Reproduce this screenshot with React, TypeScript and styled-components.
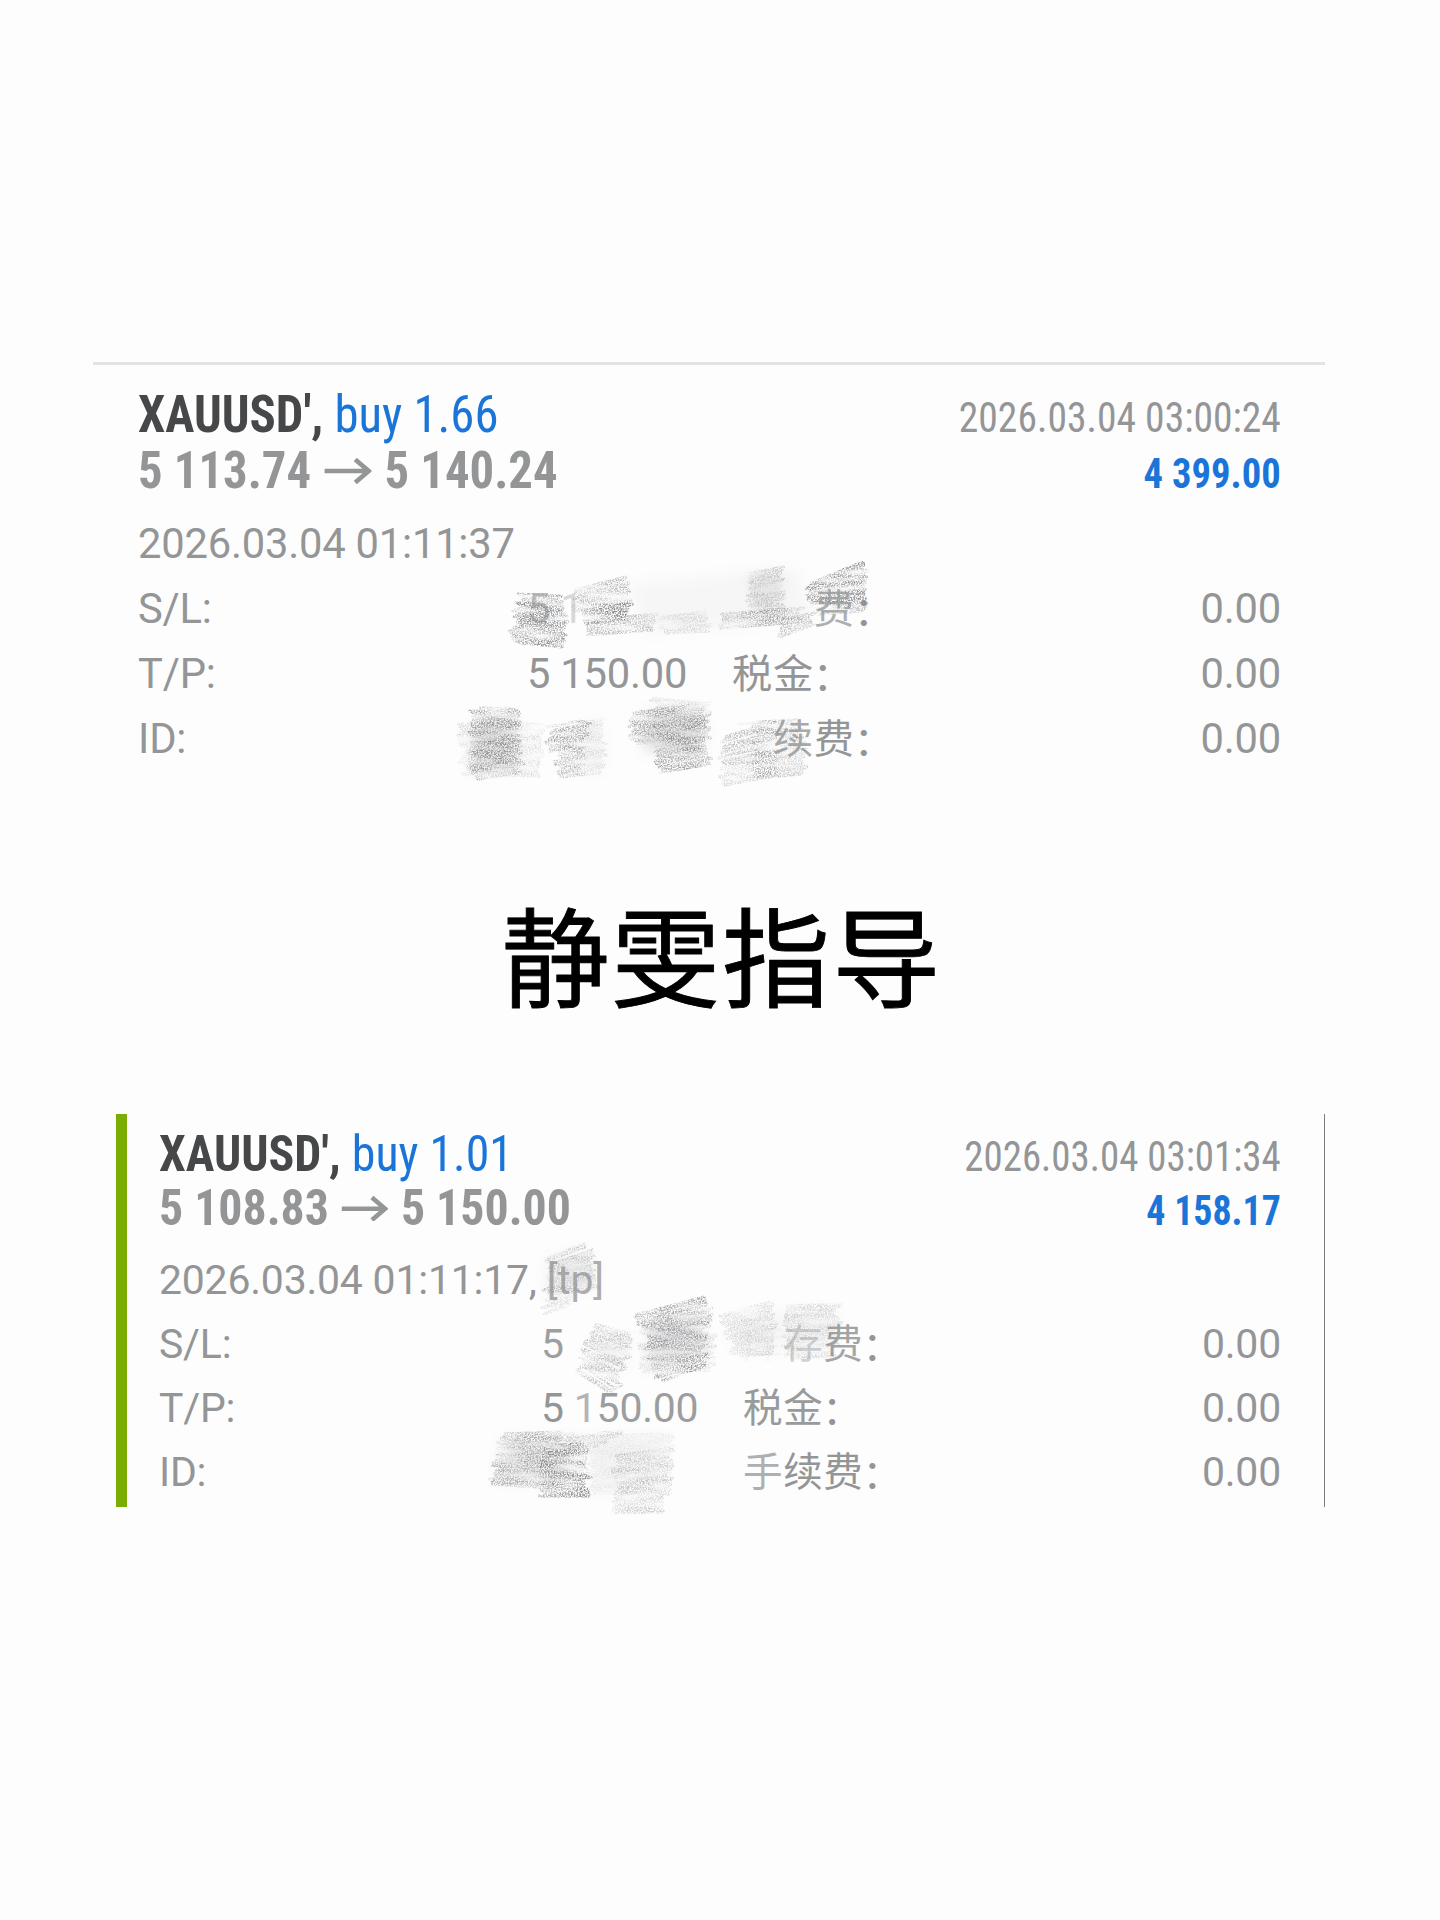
import React from "react";
import styled, { createGlobalStyle } from "styled-components";

const GlobalStyle = createGlobalStyle`
  body { margin: 0; background: #fdfdfd; }
`;

const sans = `Roboto, "Noto Sans CJK SC", sans-serif`;
const condensed = `"Roboto Condensed", Roboto, "Noto Sans CJK SC", sans-serif`;

const Page = styled.main`
  box-sizing: border-box;
  width: 1440px;
  height: 1920px;
  padding-top: 362px;
  overflow: hidden;
  background: #fdfdfd;
  color: #949596;
  font-family: ${sans};
`;

const FirstDeal = styled.article`
  position: relative;
  box-sizing: border-box;
  width: 1232px;
  height: 423px;
  margin-left: 93px;
  padding: 22.4px 44px 0 45px;
  border-top: 3px solid #e3e3e3;
`;

const SecondDeal = styled.article`
  position: relative;
  box-sizing: border-box;
  width: 1209px;
  height: 393px;
  margin: 87px 0 0 116px;
  padding: 12.7px 43px 0 32px;
  border-left: 11px solid #7aae04;
  border-right: 1px solid #7c7c7c;
`;

const Headline = styled.div<{ $k: number }>`
  display: flex;
  justify-content: space-between;
  align-items: baseline;
  height: ${(p) => 55.8 * p.$k}px;
  line-height: ${(p) => 55.1 * p.$k}px;
  font-family: ${condensed};
  font-stretch: 75%;
  white-space: pre;
`;

const Main = styled.div<{ $k: number }>`
  display: flex;
  align-items: baseline;
  font-size: ${(p) => 51.5 * p.$k}px;
  transform: scaleX(0.946);
  transform-origin: left;
`;

const Symbol = styled.span`
  font-weight: 700;
  color: #464749;
`;

const Side = styled.span`
  color: #1b75d8;
`;

const Price = styled.span`
  font-weight: 700;
`;

const ArrowIcon = styled.svg<{ $k: number }>`
  width: ${(p) => 49.5 * p.$k}px;
  height: ${(p) => 26 * p.$k}px;
  margin: 0 ${(p) => 14 * p.$k}px;
  align-self: center;
  fill: none;
  stroke: #949596;
  stroke-width: 4.6;
`;

const Closed = styled.span<{ $k: number }>`
  font-size: ${(p) => 42.4 * p.$k}px;
  transform: scaleX(0.934);
  transform-origin: right;
`;

const Profit = styled(Closed)`
  font-weight: 700;
  transform: scaleX(0.91);
  color: #1b75d8;
`;

const Details = styled.div<{ $k: number; $gap: number }>`
  margin-top: ${(p) => p.$gap}px;
  font-size: ${(p) => 41.7 * p.$k}px;
  line-height: ${(p) => 65 * p.$k}px;
  letter-spacing: -0.2px;
  white-space: pre;
`;

const Opened = styled.div<{ $k: number }>`
  height: ${(p) => 65 * p.$k}px;
`;

const DetailRow = styled.div<{ $k: number; $label: number; $value: number }>`
  display: grid;
  grid-template-columns: ${(p) => p.$label}px ${(p) => p.$value}px 1fr auto;
  align-items: baseline;
  height: ${(p) => 65 * p.$k}px;
`;

const FeeLabel = styled.span<{ $k: number }>`
  font-size: ${(p) => 40.2 * p.$k}px;
  letter-spacing: 0.7px;
`;

const Colon = styled.span`
  position: relative;
  top: 2.5px;
  left: -1px;
`;

const Ink = styled.span<{ $o: number }>`
  opacity: ${(p) => p.$o};
`;

const Caption = styled.h1`
  height: 150px;
  margin: 92px 0 0;
  padding-left: 4px;
  font: 400 108px/150px "Noto Sans CJK SC", sans-serif;
  letter-spacing: 2.3px;
  -webkit-text-stroke: 0.9px #000;
  text-align: center;
  color: #000;
`;

const SmudgeLayer = styled.svg`
  position: absolute;
  pointer-events: none;
`;

const FirstSmudges = styled(SmudgeLayer)`
  left: 337px;
  top: 165px;
`;

const SecondSmudges = styled(SmudgeLayer)`
  left: 333px;
  top: 116px;
`;

type Quad = {
  /* corners: top-left, top-right, bottom-right, bottom-left */
  q: [number, number, number, number, number, number, number, number];
  o: number;
  kind?: "wash" | "grain";
};

const firstQuads: Quad[] = [
  { q: [635, 586, 795, 570, 810, 618, 645, 632], o: 0.06, kind: "wash" },
  { q: [752, 578, 780, 574, 778, 604, 756, 610], o: 0.12, kind: "wash" },
  { q: [520, 594, 560, 596, 566, 647, 513, 642], o: 0.95 },
  { q: [576, 590, 628, 577, 626, 606, 578, 612], o: 0.55 },
  { q: [584, 606, 628, 604, 627, 619, 584, 623], o: 1 },
  { q: [584, 620, 656, 614, 654, 630, 584, 635], o: 0.6 },
  { q: [660, 617, 708, 612, 706, 631, 664, 633], o: 0.28 },
  { q: [720, 614, 800, 608, 798, 622, 718, 628], o: 0.55 },
  { q: [748, 574, 783, 567, 780, 610, 752, 612], o: 0.45 },
  { q: [740, 613, 792, 611, 790, 622, 738, 627], o: 0.55 },
  { q: [780, 620, 813, 612, 810, 624, 780, 637], o: 0.5 },
  { q: [811, 582, 863, 562, 863, 598, 811, 604], o: 0.95 },
  { q: [813, 584, 861, 570, 861, 598, 813, 602], o: 0.45 },
  { q: [818, 600, 863, 598, 862, 611, 820, 614], o: 0.6 },
  { q: [478, 720, 512, 720, 514, 768, 476, 770], o: 0.2, kind: "wash" },
  { q: [474, 708, 516, 709, 519, 772, 473, 779], o: 0.8 },
  { q: [476, 728, 506, 728, 504, 762, 474, 765], o: 0.65 },
  { q: [461, 724, 542, 724, 540, 776, 465, 774], o: 0.27 },
  { q: [550, 727, 586, 721, 586, 743, 549, 752], o: 0.8 },
  { q: [558, 746, 582, 743, 581, 773, 560, 777], o: 0.6 },
  { q: [580, 728, 600, 724, 600, 768, 582, 770], o: 0.07, kind: "wash" },
  { q: [580, 724, 602, 718, 602, 773, 560, 777], o: 0.24 },
  { q: [650, 712, 700, 712, 700, 755, 648, 750], o: 0.2, kind: "wash" },
  { q: [652, 698, 708, 704, 706, 712, 662, 710], o: 0.35 },
  { q: [632, 713, 706, 703, 704, 742, 632, 743], o: 0.7 },
  { q: [653, 722, 704, 720, 708, 764, 660, 773], o: 0.8 },
  { q: [662, 732, 698, 730, 700, 751, 664, 752], o: 0.65 },
  { q: [722, 737, 772, 722, 772, 777, 724, 785], o: 0.5 },
  { q: [754, 722, 797, 720, 805, 774, 756, 778], o: 0.5 },
  { q: [754, 752, 780, 752, 774, 772, 758, 774], o: 0.45 },
];

const secondQuads: Quad[] = [
  { q: [552, 1262, 588, 1254, 596, 1284, 550, 1292], o: 0.12, kind: "wash" },
  { q: [550, 1259, 589, 1244, 598, 1288, 548, 1292], o: 0.5 },
  { q: [545, 1290, 573, 1292, 563, 1306, 547, 1314], o: 0.3 },
  { q: [597, 1324, 632, 1334, 616, 1394, 577, 1371], o: 0.5 },
  { q: [600, 1340, 628, 1340, 618, 1370, 598, 1366], o: 0.08, kind: "wash" },
  { q: [646, 1326, 702, 1312, 702, 1352, 652, 1368], o: 0.17, kind: "wash" },
  { q: [636, 1315, 707, 1297, 708, 1326, 646, 1338], o: 0.75 },
  { q: [644, 1332, 704, 1323, 704, 1366, 658, 1381], o: 0.75 },
  { q: [637, 1345, 716, 1334, 710, 1370, 646, 1372], o: 0.3 },
  { q: [722, 1314, 774, 1302, 774, 1354, 736, 1356], o: 0.33 },
  { q: [784, 1306, 838, 1304, 836, 1356, 786, 1358], o: 0.36 },
  { q: [734, 1318, 830, 1310, 830, 1348, 738, 1350], o: 0.06, kind: "wash" },
  { q: [506, 1440, 574, 1440, 566, 1482, 500, 1478], o: 0.12, kind: "wash" },
  { q: [500, 1434, 558, 1432, 550, 1488, 494, 1484], o: 0.68 },
  { q: [546, 1445, 583, 1444, 588, 1496, 543, 1496], o: 0.95 },
  { q: [550, 1448, 580, 1448, 582, 1494, 548, 1494], o: 0.4 },
  { q: [564, 1434, 620, 1432, 594, 1448, 572, 1446], o: 0.42 },
  { q: [588, 1440, 664, 1438, 656, 1490, 594, 1490], o: 0.06, kind: "wash" },
  { q: [590, 1436, 670, 1434, 666, 1490, 594, 1494], o: 0.15 },
  { q: [617, 1456, 669, 1448, 666, 1512, 615, 1513], o: 0.42 },
];

/* Back-and-forth pencil path that fills a quad from its top edge to its bottom edge. */
function hatch(q: Quad["q"], seed: number) {
  let s = seed * 7919 + 13;
  const rnd = () => {
    s = (s * 16807) % 2147483647;
    return s / 2147483647 - 0.5;
  };
  const [ax, ay, bx, by, cx, cy, dx, dy] = q;
  const n = Math.max(3, Math.round(Math.max(Math.hypot(dx - ax, dy - ay), Math.hypot(cx - bx, cy - by)) / 3));
  let d = "";
  for (let i = 0; i <= n; i++) {
    const t = i / n;
    const left = [ax + (dx - ax) * t + rnd() * 10, ay + (dy - ay) * t];
    const right = [bx + (cx - bx) * t + rnd() * 10, by + (cy - by) * t];
    const [p, r] = i % 2 ? [right, left] : [left, right];
    d += `${i ? "L" : "M"}${p[0].toFixed(1)} ${p[1].toFixed(1)}L${r[0].toFixed(1)} ${r[1].toFixed(1)}`;
  }
  return d;
}

function Scribbles({ quads, id }: { quads: Quad[]; id: string }) {
  return (
    <>
      <defs>
        <filter id={`${id}-grain`} x="-5%" y="-5%" width="110%" height="110%">
          <feTurbulence type="fractalNoise" baseFrequency="0.7" numOctaves={2} seed={4} result="n" />
          <feColorMatrix in="n" type="matrix" values="0 0 0 0 0  0 0 0 0 0  0 0 0 0 0  3.2 0 0 0 -1.15" result="m" />
          <feTurbulence type="fractalNoise" baseFrequency="0.025 0.14" numOctaves={2} seed={9} result="s" />
          <feColorMatrix in="s" type="matrix" values="0 0 0 0 0  0 0 0 0 0  0 0 0 0 0  2.2 0 0 0 -0.4" result="streak" />
          <feComposite in="SourceGraphic" in2="m" operator="in" result="g" />
          <feComposite in="g" in2="streak" operator="in" />
          <feGaussianBlur stdDeviation="0.45" />
        </filter>
        <filter id={`${id}-wash`} x="-5%" y="-5%" width="110%" height="110%">
          <feGaussianBlur stdDeviation="6" />
        </filter>
      </defs>
      {(["wash", "grain"] as const).map((kind) => (
        <g key={kind} filter={`url(#${id}-${kind})`} fill="none" stroke="#8a8b8d" strokeLinejoin="round">
          {quads.map((s, i) =>
            (s.kind ?? "grain") === kind ? (
              <path key={i} d={hatch(s.q, i + 1)} strokeWidth={kind === "wash" ? 4 : 3} opacity={s.o} />
            ) : null
          )}
        </g>
      ))}
    </>
  );
}

type Part = [string, number?];
type Row = { name: string; value: Part[]; label: Part[]; amount: string };
type Deal = {
  k: number;
  gap: number;
  label: number;
  value: number;
  volume: string;
  from: string;
  to: string;
  closed: string;
  profit: string;
  opened: Part[];
  rows: Row[];
};

const parts = (list: Part[]) =>
  list.map(([t, o], i) => (
    <Ink key={i} $o={o ?? 1}>
      {t}
    </Ink>
  ));

function DealBody({ deal }: { deal: Deal }) {
  const { k } = deal;
  return (
    <>
      <Headline $k={k}>
        <Main $k={k}>
          <Symbol>XAUUSD', </Symbol>
          <Side>buy {deal.volume}</Side>
        </Main>
        <Closed $k={k}>{deal.closed}</Closed>
      </Headline>
      <Headline $k={k}>
        <Main $k={k}>
          <Price>{deal.from}</Price>
          <ArrowIcon $k={k} viewBox="0 0 47 26" preserveAspectRatio="none">
            <path d="M0 13H45M31 1.5L44.5 13L31 24.5" />
          </ArrowIcon>
          <Price>{deal.to}</Price>
        </Main>
        <Profit $k={k}>{deal.profit}</Profit>
      </Headline>
      <Details $k={k} $gap={deal.gap}>
        <Opened $k={k}>{parts(deal.opened)}</Opened>
        {deal.rows.map((r) => (
          <DetailRow key={r.name} $k={k} $label={deal.label} $value={deal.value}>
            <span>{r.name}</span>
            <span>{parts(r.value)}</span>
            <FeeLabel $k={k}>
              {parts(r.label)}
              <Colon>：</Colon>
            </FeeLabel>
            <span>{r.amount}</span>
          </DetailRow>
        ))}
      </Details>
    </>
  );
}

const first: Deal = {
  k: 1,
  gap: 12,
  label: 389,
  value: 205,
  volume: "1.66",
  from: "5 113.74",
  to: "5 140.24",
  closed: "2026.03.04 03:00:24",
  profit: "4 399.00",
  opened: [["2026.03.04 01:11:37"]],
  rows: [
    { name: "S/L:", value: [["5", 0.6], [" 1", 0.35]], label: [["库存", 0], ["费", 0.75]], amount: "0.00" },
    { name: "T/P:", value: [["5 150.00"]], label: [["税金"]], amount: "0.00" },
    { name: "ID:", value: [], label: [["手", 0.06], ["续", 0.8], ["费"]], amount: "0.00" },
  ],
};

const second: Deal = {
  k: 0.982,
  gap: 12.8,
  label: 382,
  value: 202,
  volume: "1.01",
  from: "5 108.83",
  to: "5 150.00",
  closed: "2026.03.04 03:01:34",
  profit: "4 158.17",
  opened: [["2026.03.04 01:11:17, "], ["[tp]", 0.75]],
  rows: [
    { name: "S/L:", value: [["5", 0.9]], label: [["库", 0.04], ["存", 0.4], ["费", 0.85]], amount: "0.00" },
    { name: "T/P:", value: [["5 "], ["1", 0.7], ["50.00", 0.92]], label: [["税金", 0.95]], amount: "0.00" },
    { name: "ID:", value: [], label: [["手", 0.75], ["续费"]], amount: "0.00" },
  ],
};

export default function App() {
  return (
    <Page>
      <GlobalStyle />
      <FirstDeal>
        <DealBody deal={first} />
        <FirstSmudges width="470" height="260" viewBox="430 530 470 260">
          <Scribbles quads={firstQuads} id="a" />
        </FirstSmudges>
      </FirstDeal>
      <Caption>静雯指导</Caption>
      <SecondDeal>
        <DealBody deal={second} />
        <SecondSmudges width="460" height="300" viewBox="460 1230 460 300">
          <Scribbles quads={secondQuads} id="b" />
        </SecondSmudges>
      </SecondDeal>
    </Page>
  );
}
